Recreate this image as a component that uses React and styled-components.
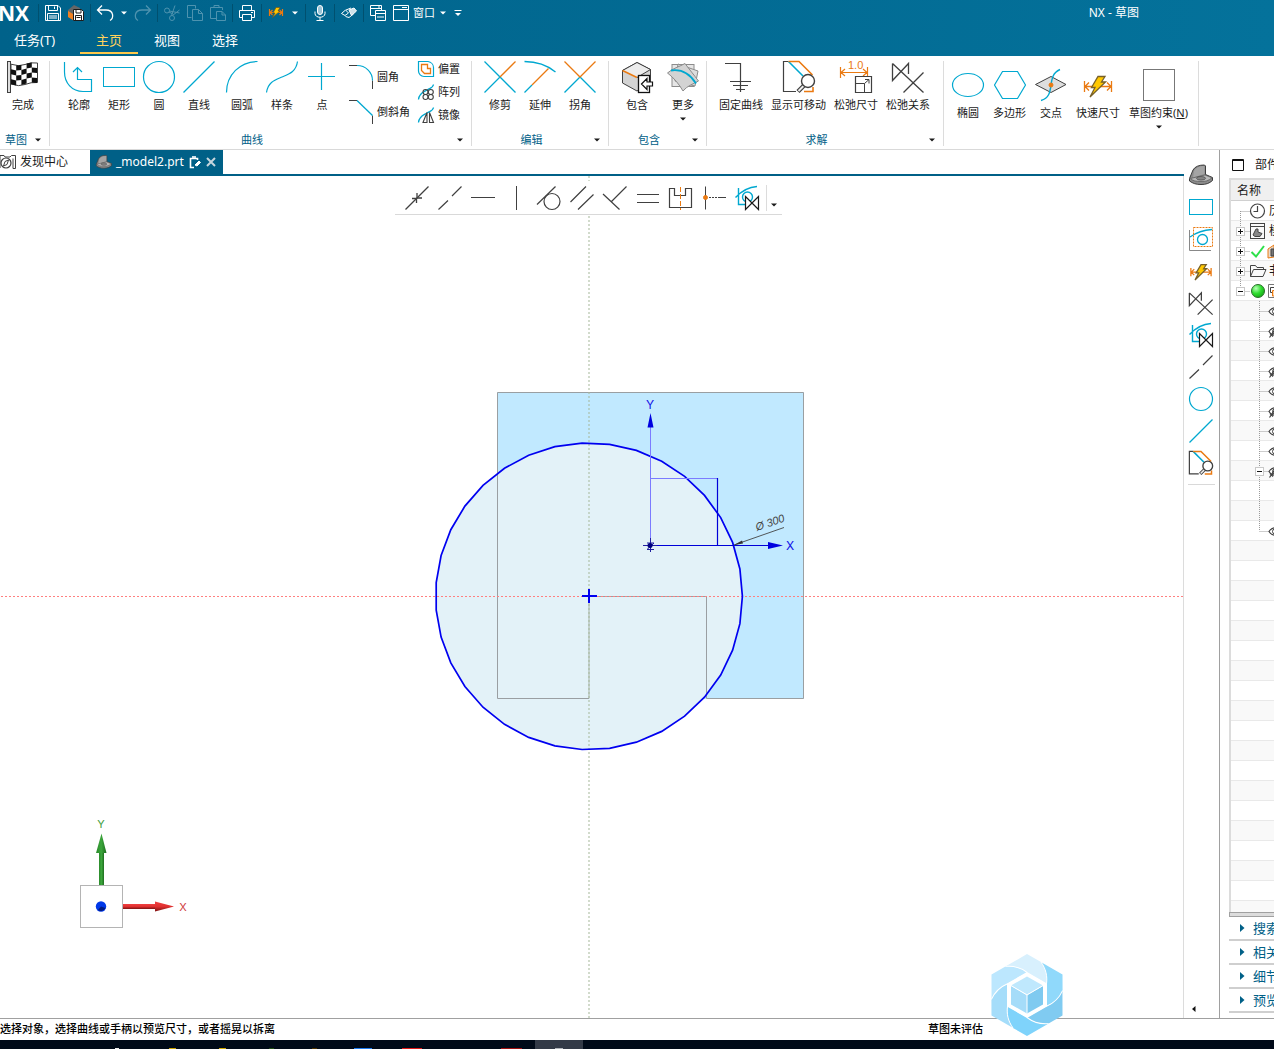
import React from "react";
import styled, { createGlobalStyle, css } from "styled-components";

const INK = "#404040";
const CYAN = "#00a8d0";
const ORANGE = "#ea7a12";
const NAVY = "#006087";

const GlobalStyle = createGlobalStyle`
  *, *::before, *::after { box-sizing: border-box; }
  body {
    margin: 0;
    background: #fff;
    color: #1a1a1a;
    font-family: "Noto Sans", "Noto Sans CJK SC", sans-serif;
    font-size: 11px;
    line-height: 16px;
  }
  button {
    margin: 0;
    padding: 0;
    border: 0;
    background: none;
    color: inherit;
    font: inherit;
    cursor: pointer;
  }
  ul { margin: 0; padding: 0; list-style: none; }
  svg { display: block; flex: none; overflow: visible; }
`;

/* ---------- window frame ---------- */

const Window = styled.div`
  position: relative;
  display: flex;
  flex-direction: column;
  height: 100vh;
  overflow: hidden;
`;

const Header = styled.header`
  flex: none;
  background: linear-gradient(90deg, #00628a, #04729b);
  color: #fff;
`;

const QuickBar = styled.div`
  display: flex;
  align-items: center;
  height: 26px;
`;

const Logo = styled.strong`
  width: 39px;
  height: 18px;
  border-right: 1px solid #00506f;
  font: bold 21px/18px "Open Sans", "Noto Sans", sans-serif;
  text-indent: -2px;
  white-space: nowrap;
`;

const QuickGroup = styled.div`
  display: flex;
  align-items: center;
  gap: 7px;
  height: 18px;
  padding: 0 6px;
  border-right: ${(p) => (p.$last ? "0" : "1px solid #00506f")};
`;

const IconButton = styled.button`
  display: flex;
  align-items: center;
  justify-content: center;
  gap: 4px;
  min-width: ${(p) => p.$w || 16}px;
  height: ${(p) => p.$h || 16}px;
  opacity: ${(p) => (p.disabled ? 0.3 : 1)};
`;

const WindowTitle = styled.h1`
  margin: 0 135px 0 auto;
  font-size: 12px;
  font-weight: 400;
  line-height: 16px;
`;

const MenuBar = styled.nav`
  display: flex;
  height: 30px;
`;

const MenuItem = styled.button`
  width: ${(p) => (p.$first ? 80 : 58)}px;
  height: 28px;
  padding: 2px 0 0;
  border-bottom: 2px solid transparent;
  font-size: 13px;
  line-height: 24px;
  ${(p) => p.$first && css`
    padding-left: 14px;
    text-align: left;
  `}
  ${(p) => p.$active && css`
    border-color: #ffc84a;
    color: #ffd35c;
  `}
`;

/* ---------- ribbon ---------- */

const Ribbon = styled.section`
  display: flex;
  flex: none;
  height: 94px;
  padding: 5px 0 3px;
  border-bottom: 1px solid #d9d9d9;
`;

const Group = styled.div`
  display: flex;
  flex-direction: column;
  justify-content: space-between;
  flex: none;
  width: ${(p) => p.$w}px;
  border-right: 1px solid #dcdcdc;
`;

const GroupBody = styled.div`
  display: flex;
  align-items: flex-start;
  gap: ${(p) => p.$gap || 8}px;
  padding: ${(p) => (p.$low ? 8 : 0)}px 0 0 ${(p) => p.$pad}px;
`;

const Cluster = styled.div`
  display: flex;
  gap: 8px;
`;

const GroupFooter = styled.div`
  display: flex;
  align-items: center;
  height: 13px;
  padding-right: 5px;
  color: ${NAVY};
`;

const GroupName = styled.span`
  flex: 1;
  text-align: center;
  line-height: 13px;
`;

const Tool = styled.button`
  display: flex;
  flex-direction: column;
  align-items: center;
  gap: 4px;
  min-width: 32px;
  white-space: nowrap;
`;

const ToolArrow = styled.span`
  display: flex;
  height: 4px;
`;

const Stack = styled.div`
  display: flex;
  flex-direction: column;
  align-items: flex-start;
  gap: ${(p) => (p.$large ? 3 : 7)}px;
`;

const RowTool = styled.button`
  display: flex;
  align-items: center;
  gap: 4px;
  height: ${(p) => (p.$large ? 32 : 16)}px;
  white-space: nowrap;
`;

/* ---------- work area ---------- */

const Body = styled.div`
  display: flex;
  flex: 1;
  min-height: 0;
`;

const Main = styled.main`
  display: flex;
  flex: 1;
  flex-direction: column;
  min-width: 0;
`;

const DocTabs = styled.div`
  display: flex;
  flex: none;
  height: 26px;
  border-bottom: 2px solid ${NAVY};
  font-size: 12px;
`;

const DocTab = styled.button`
  display: flex;
  align-items: center;
  gap: 4px;
  width: ${(p) => (p.$active ? 133 : 90)}px;
  padding: 0 ${(p) => (p.$active ? 6 : 0)}px;
  white-space: nowrap;
  ${(p) => p.$active && css`
    background: ${NAVY};
    color: #fff;
  `}
`;

const TabActions = styled.span`
  display: flex;
  gap: 4px;
  margin-left: auto;
`;

const Canvas = styled.div`
  position: relative;
  flex: 1;
  min-height: 0;
  border-right: 1px solid #dcdcdc;
  overflow: hidden;
`;

const Scene = styled.svg`
  position: absolute;
  inset: 0;
  width: 100%;
  height: 100%;
`;

const ConstraintBar = styled.div`
  position: absolute;
  top: 5px;
  left: 395px;
  display: flex;
  align-items: center;
  gap: 7px;
  height: 34px;
  padding: 0 3px 0 10px;
  border-bottom: 1px solid #d9d9d9;
  background: #fff;
`;

const ConstraintTools = styled.div`
  display: flex;
  gap: 9px;
`;

const OverflowCell = styled.div`
  display: flex;
  align-items: center;
  width: 13px;
  height: 26px;
  padding: 14px 0 0 3px;
  border-left: 1px solid #dcdcdc;
`;

const Rail = styled.aside`
  display: flex;
  flex: none;
  flex-direction: column;
  align-items: center;
  gap: 8px;
  width: 35px;
  padding: 13px 1px 3px 0;
`;

const RailLine = styled.hr`
  width: 27px;
  margin: 1px 0 0;
  border: 0;
  border-top: 1px solid #d9d9d9;
`;

const RailFooter = styled.div`
  display: flex;
  width: 100%;
  margin-top: auto;
  padding-left: 6px;
`;

/* ---------- navigator ---------- */

const Panel = styled.aside`
  display: flex;
  flex: none;
  flex-direction: column;
  width: 55px;
  border-left: 1px solid #a0a0a0;
  padding-left: 9px;
  overflow: hidden;
`;

const PanelTitle = styled.h2`
  display: flex;
  align-items: center;
  gap: 11px;
  height: 28px;
  margin: 0;
  padding: 2px 0 0 3px;
  font-size: 12px;
  font-weight: 400;
  white-space: nowrap;
`;

const Tree = styled.div`
  display: flex;
  flex: 1;
  flex-direction: column;
  min-height: 0;
  border-top: 2px solid #dcdcdc;
  border-left: 2px solid #dcdcdc;
`;

const TreeHead = styled.div`
  flex: none;
  height: 21px;
  padding-left: 6px;
  border-bottom: 1px solid #d0d0d0;
  background: #f0f0f0;
  font-size: 12px;
  line-height: 22px;
`;

const TreeList = styled.ul`
  flex: 1;
  min-height: 0;
  overflow: hidden;
`;

const TreeRow = styled.li`
  display: flex;
  height: 20px;
  font-size: 12px;
  line-height: 20px;
  white-space: nowrap;
  box-shadow: inset 0 -1px #e9e9e9;
  &:nth-child(even) { background: #f9f9f9; }
`;

const Splitter = styled.div`
  flex: none;
  height: 5px;
  border: 1px solid #a0a0a0;
  border-width: 1px 0 1px 1px;
  background: #dcdcdc;
`;

const Section = styled.button`
  display: flex;
  flex: none;
  align-items: center;
  gap: 8px;
  height: 24px;
  padding-left: 10px;
  border-bottom: 2px solid #cfcfcf;
  color: ${NAVY};
  font-size: 13px;
  white-space: nowrap;
`;

const PanelEnd = styled.div`
  flex: none;
  height: 5px;
`;

/* ---------- bottom ---------- */

const StatusBar = styled.footer`
  display: flex;
  flex: none;
  align-items: center;
  justify-content: space-between;
  height: 22px;
  padding: 0 291px 2px 0;
  border-top: 1px solid #a0a0a0;
  font-weight: 500;
  color: #000;
`;

const Taskbar = styled.div`
  flex: none;
  height: 9px;
  background: #000a18;
`;

const Watermark = styled.div`
  position: absolute;
  right: 211px;
  bottom: 13px;
`;

/* ---------- icons ---------- */

const Icon = ({ s = 32, children, stroke = INK, w = s, h = s }) => (
  <svg width={w} height={h} viewBox={`0 0 ${w} ${h}`} fill="none" stroke={stroke} aria-hidden="true">
    {children}
  </svg>
);

const Caret = ({ color = "#1a1a1a" }) => (
  <svg width="8" height="4" viewBox="0 0 8 4" aria-hidden="true">
    <path d="M1 0.5H7L4 3.5Z" fill={color} />
  </svg>
);

const MovableGlyph = ({ sw = 1.2 }) => (
  <>
    <path d="M5.5 0.5H0.5V30.5H13" strokeWidth={sw} />
    <path d="M5.5 0.5L20 15" stroke={CYAN} strokeWidth={sw + 0.4} />
    <path d="M5.5 0.5H16L29.5 14M30 26V30.5H21" stroke={ORANGE} strokeWidth={sw + 0.4} />
    <path d="M21 24.5L15 30.5" strokeWidth="4.5" />
    <path d="M21 24.5L15.5 30" stroke="#eee" strokeWidth="2" />
    <circle cx="25" cy="20" r="6.5" fill="#fff" strokeWidth={sw + 0.2} />
  </>
);

const RelaxGlyph = ({ sw = 1.3 }) => (
  <path d="M0.5 2.5V19.5L16.5 2.5V13M0.5 2.5L31.5 31.5M31.5 11.5L11.5 31.5" strokeWidth={sw} />
);

const BoltGlyph = ({ sw = 1.3 }) => (
  <>
    <path d="M2.5 12V23M29.5 12V23M3 17.5H29M7 13.5L3 17.5L7 21.5M25 13.5L29 17.5L25 21.5" stroke={ORANGE} strokeWidth={sw} />
    <path d="M16 7.5H23L19.5 13H23.5L8 28L13 18.5H9.5Z" fill="#ffc800" stroke="#77602a" strokeWidth={sw} />
  </>
);

const Bowtie = () => (
  <>
    <path d="M3.5 2V18.5H10M0.5 11.5C7 4.5 14 1 22 0.5" stroke={CYAN} strokeWidth="1.4" />
    <circle cx="12.5" cy="11" r="5" stroke={CYAN} strokeWidth="1.4" />
    <path d="M10.5 10.5V23.5L23.5 10.5V23.5Z" fill="#fff" stroke="#1a1a1a" strokeWidth="1.2" />
  </>
);

const PartGlyph = () => (
  <>
    <path d="M0.5 15.5L4 7C6 3.5 10 2 15.5 2L16.5 3V11.5L23.500 14.5V17.500C20 20.5 17 21.5 12 21.5S4 20.500 0.5 18Z" fill="#8b8b8b" stroke="#3c3c3c" />
    <path d="M5 8C7 4.5 10 3 15.5 3V11L4 14.500Z" fill="#a4a4a4" stroke="none" />
    <path d="M1.500 15.500L16 12L23 14.800C19 18 17 18.500 12 18.500S4 18 1.500 15.500Z" fill="#b9b9b9" stroke="#555" strokeWidth="0.700" />
    <ellipse cx="12" cy="15.300" rx="4.500" ry="1.800" fill="#858585" stroke="#444" strokeWidth="0.700" />
  </>
);

const FlagIcon = () => {
  const cells = [];
  for (let r = 0; r < 4; r++)
    for (let c = 0; c < 5; c++)
      if ((r + c) % 2 === 1) {
        const x = 4 + c * 5.2;
        const a = [1.2, 2.4, 2, 0.4, -0.6, 0];
        const y0 = 2 + r * 5 + a[c];
        const y1 = 2 + r * 5 + a[c + 1];
        cells.push(`M${x} ${y0}L${x + 5.2} ${y1}V${y1 + 5}L${x} ${y0 + 5}Z`);
      }
  return (
    <Icon>
      <path d="M4 3.2Q12 6 18 3.500T30.500 2V21.500Q24 21 18 23.500T4 23Z" fill="#fff" />
      <path d={cells.join("")} fill="#111" stroke="none" />
      <rect x="0.5" y="0.5" width="3" height="31" fill="#ddd" />
    </Icon>
  );
};

const contourIcon = (
  <Icon stroke={CYAN}>
    <path strokeWidth="1.2" d="M1.5 1V11C1.5 22 9 30.500 20 30.500H28.500V18.500H14.500V6.500M10 11L14.500 6.500L19 11" />
  </Icon>
);
const rectIcon = <Icon stroke={CYAN}><rect x="0.5" y="6.5" width="31" height="19" /></Icon>;
const circleIcon = <Icon stroke={CYAN}><circle cx="16" cy="16" r="15.500" strokeWidth="1.2" /></Icon>;
const lineIcon = <Icon stroke={CYAN}><path strokeWidth="1.2" d="M0.5 31.5L31.5 0.5" /></Icon>;
const arcIcon = <Icon stroke={CYAN}><path strokeWidth="1.2" d="M0.5 31.5C0.5 14 14 0.5 31.5 0.5" /></Icon>;
const splineIcon = <Icon stroke={CYAN}><path strokeWidth="1.2" d="M0.5 31.5C2 21 9 19 16 16S30 11 31.5 0.5" /></Icon>;
const pointIcon = <Icon stroke={CYAN}><path d="M15.500 2V29M2 15.500H29" strokeWidth="1.2" /></Icon>;
const filletIcon = (
  <Icon s={24}>
    <path d="M0 0.5H8M23.500 15.500V24" />
    <path d="M8 0.5C16.500 0.500 23.500 7 23.500 15.500" stroke={CYAN} strokeWidth="1.2" />
  </Icon>
);
const chamferIcon = (
  <Icon s={24}>
    <path d="M0 0.5H8M23.500 15.500V24" />
    <path d="M8 0.5L23.500 15.500" stroke={CYAN} strokeWidth="1.3" />
  </Icon>
);
const offsetIcon = (
  <Icon s={16} stroke={CYAN}>
    <path strokeWidth="1.2" d="M0.5 0.5H10C13 1 15.500 3.500 15.500 6.500V15.500H6C3 15.500 0.500 13 0.500 10Z" />
    <path strokeWidth="1.3" stroke={ORANGE} d="M3.500 3.500H9.500V7.500H12.500V12.500H6.500L3.500 9.500Z" />
  </Icon>
);
const patternIcon = (
  <Icon s={16}>
    <path stroke={CYAN} strokeWidth="1.3" d="M0.5 15.500C1 9 6 8 9 6S15 4 15.500 0.500" />
    <g strokeWidth="1.1">
      <circle cx="7.5" cy="8" r="2.500" /><circle cx="12.800" cy="8" r="2.500" />
      <circle cx="7.5" cy="13" r="2.500" /><circle cx="12.800" cy="13" r="2.500" />
    </g>
  </Icon>
);
const mirrorIcon = (
  <Icon s={16}>
    <path stroke={CYAN} strokeWidth="1.3" d="M0.5 15.500C1 9 6 8 9 6S15 4 15.500 0.500" />
    <path strokeWidth="1.1" d="M9 15.500V5.500L5 15.500ZM11.500 15.500V5.500L15.500 15.500Z" />
  </Icon>
);
const trimIcon = (
  <Icon stroke={CYAN}>
    <path strokeWidth="1.3" d="M0.5 0.5L31.5 31.5M0.5 31.5L16 16" />
    <path strokeWidth="1.3" stroke={ORANGE} d="M16 16L31.5 0.5" />
  </Icon>
);
const extendIcon = (
  <Icon stroke={CYAN}>
    <path strokeWidth="1.3" d="M0.5 0.5C12 0.500 23 4 31.500 11M0.5 31.500L8 24" />
    <path strokeWidth="1.3" stroke={ORANGE} d="M24.500 7.500L8 24" />
  </Icon>
);
const cornerIcon = (
  <Icon stroke={CYAN}>
    <path strokeWidth="1.3" d="M0.5 31.5L16 16L31.5 31.5" />
    <path strokeWidth="1.3" stroke={ORANGE} d="M0.5 0.5L16 16L31.5 0.5" />
  </Icon>
);
const includeIcon = (
  <Icon>
    <path d="M1.500 9.500L16 1.500L29.500 8.500V22L16 30L1.500 22Z" fill="#d3d3d3" />
    <path d="M1.500 9.500L16 1.500L29.500 8.500L16 16.500Z" fill="#ececec" stroke="none" />
    <path d="M16 1.500L1.500 9.500V22M16 1.500L29.500 8.500L16 16.500" />
    <path d="M1.500 9.500L16 16.500" stroke={ORANGE} strokeWidth="1.5" />
    <rect x="17.500" y="14.500" width="11" height="17" fill="#fff" stroke="#111" strokeWidth="1.3" />
    <path d="M20.500 23L26 17.500V21H31.500V25H26V28.500Z" fill="#fff" stroke="#111" strokeWidth="1.2" />
  </Icon>
);
const moreIcon = (
  <Icon stroke="#8c8c8c">
    <rect x="5" y="3.500" width="22" height="22" fill="#e6e6e6" />
    <path d="M11 3L31 10L28 25L8 20Z" fill="#ddd" />
    <path d="M0.5 12C6 7 12 6 18 2.500C22 8 27 14 31.500 20C26 23 20 25 16 30C12 23 7 17 0.500 12Z" fill="#d3d3d3" />
    <path d="M4 9.500C14 8 23 13 29 22.500" stroke={CYAN} strokeWidth="1.8" />
  </Icon>
);
const groundIcon = (
  <Icon>
    <path strokeWidth="1.2" d="M0 2.500H15.500V31M5 20.500H26M8 24.500H23M11 28.500H20" />
  </Icon>
);
const relaxDimIcon = (
  <Icon>
    <text x="8" y="8" fontSize="11" fontFamily="'Liberation Sans', sans-serif" fill={ORANGE} stroke="none">1.0</text>
    <path stroke={ORANGE} strokeWidth="1.2" d="M0.500 6V17M27.500 6V17M1 11.500H27M5 8L1 11.500L5 15M23 8L27 11.500L23 15" />
    <path strokeWidth="1.2" fill="#fff" d="M15.500 15.500H31.500V31.500H15.500Z" />
    <path d="M15.500 22.500H24.500V31.500M24.500 22.500L29 18.500M25 18.500H29V22.500" />
  </Icon>
);
const ellipseIcon = <Icon stroke={CYAN}><ellipse cx="16" cy="16" rx="15.500" ry="11.500" strokeWidth="1.2" /></Icon>;
const polygonIcon = <Icon stroke={CYAN}><path strokeWidth="1.2" d="M0.5 16L8.500 2.500H23.500L31.500 16L23.500 29.500H8.500Z" /></Icon>;
const crossPointIcon = (
  <Icon>
    <path d="M0.500 15.500L16 7.500L31 15.500L16 23.500Z" fill="#dedede" />
    <path d="M6 31.500C22 27 10 7 25 0.500" stroke={CYAN} strokeWidth="1.4" />
    <circle cx="16" cy="16" r="2" fill={ORANGE} stroke={ORANGE} />
  </Icon>
);
const squareIcon = <Icon stroke="#777"><rect x="0.5" y="0.5" width="31" height="31" /></Icon>;

/* 16px icons of the quick bar */
const saveIcon = <Icon s={16} stroke="#fff"><path d="M0.5 0.5H13L15.500 3V15.500H0.500ZM3.500 0.500V5.500H12.500V0.500M2.500 15.500V8.500H13.500V15.500M4 11H12M4 13H12M9.500 1.500V4" /></Icon>;
const saveAsIcon = (
  <Icon s={16}>
    <path d="M0 5L6 0L12 3V13L5 15L0 12Z" fill="#666" stroke="none" />
    <path d="M0 6L5 9V15L0 12Z" fill="#f08020" stroke="none" />
    <path d="M5.500 4.500H13.500L15.500 6.500V15.500H5.500Z" fill="#fff" stroke="#1d1d1d" />
    <path d="M8 4.500V8H13V4.500M7.500 15.500V10.500H13.500V15.500M8.500 12.500H12.500" stroke="#1d1d1d" />
  </Icon>
);
const undoIcon = <Icon s={16} stroke="#fff"><path strokeWidth="1.3" d="M5 0.500L0.500 5L5 9.500M0.500 5H9C17 5 17 13 13 15.500" /></Icon>;
const redoIcon = <Icon s={16} stroke="#fff"><path strokeWidth="1.3" d="M11 0.500L15.500 5L11 9.500M15.500 5H7C-1 5 -1 13 3 15.500" /></Icon>;
const cutIcon = <Icon s={16} stroke="#fff"><circle cx="3" cy="5.500" r="2.500" /><circle cx="8" cy="13" r="2.500" /><path d="M5.500 6L15.500 8M7.500 10.500L11 0.500M8.500 10.500L15.500 5M5 7L9 9" /></Icon>;
const copyIcon = <Icon s={16} stroke="#fff"><path d="M4.500 12.500H0.500V0.500H8.500V3.500M5.500 4.500H11.500L15.500 8.500V15.500H5.500ZM11.500 4.500V8.500H15.500" /></Icon>;
const pasteIcon = <Icon s={16} stroke="#fff"><path d="M6 13.500H0.500V2.500H12.500V5M4 2.500V0.500H9V2.500M6.500 6.500H12L15.500 10V15.500H6.500ZM12 6.500V10H15.500" /></Icon>;
const printIcon = <Icon s={16} stroke="#fff"><path d="M3.500 5V0.500H12.500V5M3 12.500H0.500V5.500H15.500V12.500H13M3.500 9.500H12.500V15.500H3.500ZM12 7.500H14" /></Icon>;
const quickDimIcon = (
  <Icon s={16} stroke={ORANGE}>
    <path d="M1.500 4V11M14.500 4V11M2 7.500H14M4.500 5L2 7.500L4.500 10M11.500 5L14 7.500L11.500 10" strokeWidth="1.2" />
    <path d="M8 2.500H12L10 6H12L4.500 12.500L7 8H5Z" fill="#ffc800" stroke="#6e5520" strokeWidth="0.700" />
  </Icon>
);
const micIcon = <Icon s={16} stroke="#fff"><rect x="5.500" y="0.500" width="5" height="9" rx="2.500" fill="#9cc4d6" /><path d="M3 6.500V8.500C3 13.500 13 13.500 13 8.500V6.500M8 12.500V15.500M4.500 15.500H11.500" /></Icon>;
const brushIcon = <Icon s={16} stroke="#fff"><path d="M0.500 8.500L4.500 5L7.500 8L4 10.500ZM5 5L10 3M4.500 11.500L8 12.500L12.500 9" /><path d="M8 5L13 3L15.500 6L10.500 10.500Z" fill="#cfe2ea" /></Icon>;
const windowsIcon = <Icon s={16} stroke="#fff"><path d="M5 10.500H0.500V0.500H11.500V5M0.500 3.500H11.500M8 2H10M5.500 5.500H15.500V15.500H5.500ZM5.500 8.500H15.500M7 12H14" /></Icon>;
const windowIcon = <Icon s={16} stroke="#fff"><path d="M0.500 0.500H15.500V15.500H0.500ZM0.500 4.500H15.500M9 2.500H14" /></Icon>;

/* constraint tools above the sheet */
const constraintTools = [
  ["重合", <><path d="M0.500 23.500L23.500 0.500" strokeWidth="1.2" /><path d="M7 12.500H11.500V17M12 7V12H17" strokeWidth="1.3" /></>],
  ["共线", <path key="p" d="M0.500 23.500L10 14.500M14 10L23.500 0.500" strokeWidth="1.2" />],
  ["水平", <path key="p" d="M0 11.500H24" />],
  ["竖直", <path key="p" d="M12.500 0V24" />],
  ["相切", <><path d="M0 18.500L18.500 0.500" strokeWidth="1.2" /><circle cx="15" cy="15.500" r="8" strokeWidth="1.2" /></>],
  ["平行", <path key="p" d="M0.500 16L16 0.500M8 23.500L23.500 8.500" strokeWidth="1.2" />],
  ["垂直", <path key="p" d="M0 8L16.500 23.500M8.500 15.500L23.500 0.500" strokeWidth="1.2" />],
  ["等长", <path key="p" d="M1 8.500H23M1 16.500H23" />],
  ["对称", <><path d="M0.500 2.500H5.500V9.500H16.500V2.500H22.500V21.500H0.500Z" strokeWidth="1.2" /><path d="M11.500 1V24" stroke={ORANGE} strokeDasharray="5 2" /></>],
  ["中点", <><path d="M3.500 0.500V23.500M16 11.500H24" /><path d="M7 11.500H15" strokeDasharray="2 1" /><circle cx="3.500" cy="11.500" r="2" fill={ORANGE} stroke={ORANGE} /></>],
  ["松弛", <Bowtie key="p" />],
];

const scaled = (k, node) => <g transform={`scale(${k})`}>{node}</g>;

const railTools = [
  ["部件", <PartGlyph key="p" />],
  ["矩形", <rect key="p" x="0.500" y="4.500" width="23" height="15" stroke={CYAN} />],
  ["草图", <><path d="M0.500 3V23.500H22" stroke="#888" /><path d="M1 10C8 5 14 3 23 2.500" stroke={CYAN} strokeWidth="1.3" /><circle cx="13.500" cy="12.500" r="5" stroke={CYAN} strokeWidth="1.3" /><rect x="4.500" y="0.500" width="19" height="19" stroke={ORANGE} strokeDasharray="2 1" /></>],
  ["快速尺寸", scaled(0.75, <BoltGlyph sw={1.7} />)],
  ["松弛关系", scaled(0.75, <RelaxGlyph sw={1.7} />)],
  ["松弛", <Bowtie key="p" />],
  ["直线段", <path key="p" d="M0.500 23.500L10 14.500M14 10L23.500 0.500" strokeWidth="1.2" />],
  ["圆", <circle key="p" cx="12" cy="12" r="11.500" stroke={CYAN} strokeWidth="1.2" />],
  ["直线", <path key="p" d="M0.500 23.500L23.500 0.500" stroke={CYAN} strokeWidth="1.2" />],
  ["显示可移动", scaled(0.75, <MovableGlyph sw={1.6} />)],
];

/* ---------- canvas drawing ---------- */

/* the viewer tessellates the circle into 35 chords */
const circlePoints = Array.from({ length: 35 }, (_, i) => {
  const a = (i * 2 * Math.PI) / 35;
  return `${(589 + 153.4 * Math.cos(a)).toFixed(1)},${(596.3 - 153.4 * Math.sin(a)).toFixed(1)}`;
}).join(" ");

const Sketch = () => (
  <Scene fill="none" aria-label="草图">
    <defs>
      <linearGradient id="shaftG" x1="0" x2="1" y1="0" y2="0"><stop offset="0" stopColor="#2b8a2b" /><stop offset="0.500" stopColor="#3ba53b" /><stop offset="1" stopColor="#1f6e1f" /></linearGradient>
      <linearGradient id="shaftR" x1="0" x2="0" y1="0" y2="1"><stop offset="0" stopColor="#f04040" /><stop offset="0.500" stopColor="#e03030" /><stop offset="1" stopColor="#7d1212" /></linearGradient>
    </defs>
    <g transform="translate(0,-176)">
      <rect x="497" y="392" width="307" height="307" fill="#c1e9ff" stroke="none" />
      <polygon points={circlePoints} fill="#e3f2f8" />
      <path d="M589 698.500H497.500V392.500H803.500V698.500H706.500V596.500H589" stroke="#9a9fa2" />
      <path d="M589 596V698.500" stroke="#a5b2a8" />
      <path d="M589 176V1018" stroke="#a5b89a" strokeOpacity="0.500" strokeWidth="2" strokeDasharray="2 2" />
      <line x1="1" x2="100%" y1="596.500" y2="596.500" stroke="#ff8080" strokeDasharray="2 2" />
      <polygon points={circlePoints} stroke="#0000f0" strokeWidth="1.700" />
      <path d="M589 589V603M582 596H597" stroke="#0000f0" strokeWidth="2" />
      <path d="M650.500 545V427M650 478.500H717" stroke="#7b7bff" />
      <path d="M717.500 478V545M650 545.500H770" stroke="#0000d8" strokeWidth="1.200" />
      <path d="M650.500 413L653.500 427.500H647.500ZM783 545.500L768 542V549Z" fill="#0000e0" />
      <path d="M643 545.500H657M650.500 538V552M647 543H654L647 549.500H654" stroke="#2020a0" />
      <circle cx="650" cy="545.500" r="2.500" fill="#000080" />
      <path d="M734 545L784 527.500" stroke="#444" strokeWidth="0.900" />
      <path d="M734 545L742 540.500L743 543.500Z" fill="#333" />
      <g fontFamily="Inter, 'Noto Sans', sans-serif" fontSize="12" textAnchor="middle">
        <text x="650" y="409" fill="#1010e8">Y</text>
        <text x="790" y="550" fill="#1010e8">X</text>
        <text x="101" y="828" fill="#3fa03f" fontSize="11">Y</text>
        <text x="183" y="911" fill="#d04040" fontSize="11">X</text>
      </g>
      <text transform="translate(757,531) rotate(-19)" fontFamily="'Liberation Sans', sans-serif" fontStyle="italic" fontSize="11" fill="#444">Ø 300</text>

      <rect x="80.500" y="885.500" width="42" height="42" stroke="#b4b4b4" />
      <rect x="99" y="852" width="5" height="33" fill="url(#shaftG)" />
      <path d="M101.500 833.500L106.500 853H96Z" fill="url(#shaftG)" />
      <rect x="123" y="904" width="33" height="5" fill="url(#shaftR)" />
      <path d="M174 906.500L155 901.500V911.500Z" fill="url(#shaftR)" />
      <circle cx="101" cy="906.500" r="5.200" fill="#0038e8" />
      <path d="M101 906.500L105.500 908A5 5 0 0 1 98 910Z" fill="#001a80" />
    </g>
  </Scene>
);

/* ---------- tree ---------- */

const dots = { stroke: "#9a9a9a", strokeDasharray: "1 1" };

const Expander = ({ x, open }) => (
  <g>
    <rect x={x - 4} y="6.500" width="8" height="8" fill="#fff" stroke="#c8c8c8" />
    <path d={open ? `M${x - 2.5} 10.500H${x + 2.5}` : `M${x - 2.5} 10.500H${x + 2.5}M${x} 8V13`} stroke="#111" />
  </g>
);

const rootGlyphs = {
  clock: <g stroke="#444" strokeWidth="1.200"><circle cx="26.500" cy="10" r="7" /><path d="M26.500 5V10.500H22.500" /></g>,
  views: <g stroke="#444"><rect x="19.500" y="2.500" width="14" height="15" /><path d="M19.500 5.500H33.500" /><path d="M22 14L25 8L27 8V11L31 12.500L29 15.500H24Z" fill="#888" /></g>,
  check: <g><path d="M20.500 11L25 15.500L33 5" stroke="#2ee04a" strokeWidth="2" /><path d="M37 8L43 4V16L37 17Z" fill="#e8d8c8" stroke={ORANGE} /><path d="M40 8H43V15H40Z" fill="#777" /></g>,
  folder: <path d="M19.500 15.500V4.500H24.500L26 6.500H32.500V8.500M19.500 15.500L22.500 8.500H35L32 15.500Z" stroke="#444" />,
  ball: <g><circle cx="27" cy="10" r="6.500" fill="url(#ballG)" stroke="#2c6e2c" /><path d="M43 3.500H37.500V16.500H43" stroke="#777" /><path d="M43 6.500H39.500V11.500H43" stroke={INK} /><path d="M41.500 9.500H44V15H41.500Z" fill="#ffd8b0" stroke={ORANGE} /></g>,
};

const roots = [
  { glyph: "clock", text: "历" },
  { glyph: "views", text: "模", box: true },
  { glyph: "check", box: true },
  { glyph: "folder", text: "非", box: true },
  { glyph: "ball", box: true, open: true },
];

const children = ["eye", "off", "eye", "off", "eye", "off", "eye", "eye", "offbox", "none", "none", "eye"];

const RootRow = ({ row, index }) => (
  <TreeRow>
    <Icon w={38} h={20}>
      <defs>
        <radialGradient id="ballG" cx="0.35" cy="0.3" r="0.8"><stop offset="0" stopColor="#b8ffb8" /><stop offset="0.500" stopColor="#2fdd2f" /><stop offset="1" stopColor="#12a012" /></radialGradient>
      </defs>
      <path d={index === 0 ? "M9.500 10V20" : index === 4 ? "M9.500 0V10" : "M9.500 0V20"} {...dots} />
      <path d="M9.500 10.500H19" {...dots} />
      {row.box && <Expander x={9.5} open={row.open} />}
      {rootGlyphs[row.glyph]}
    </Icon>
    {row.text}
  </TreeRow>
);

const ChildRow = ({ kind, last }) => (
  <TreeRow>
    <Icon w={43} h={20}>
      <path d={last ? "M28.500 0V10" : "M28.500 0V20"} {...dots} />
      {kind !== "none" && (
        <>
          <path d="M28.500 10.500H38" {...dots} />
          <path d="M38 10.500C41 5.500 48 5.500 51 10.500C48 15.500 41 15.500 38 10.500Z" strokeWidth="1.200" />
          <circle cx="44" cy="10.500" r="2.500" />
        </>
      )}
      {kind.startsWith("off") && <path d="M38.500 16.500L47 4M39 12.500L42 15.500" strokeWidth="1.200" />}
      {kind === "offbox" && <Expander x={28.5} open />}
    </Icon>
  </TreeRow>
);

/* ---------- watermark emblem ---------- */

const blades = [
  [0, "#d8f0fd"], [60, "#90d9fb"], [120, "#80cbf1"],
  [180, "#7fd3fb"], [240, "#a5ddfa"], [300, "#bce7fe"],
];

const Emblem = () => (
  <svg width="72" height="82" viewBox="-36 -41 72 82" aria-hidden="true">
    {blades.map(([angle, color]) => (
      <path
        key={angle}
        transform={`rotate(${angle})`}
        d="M0 -22.500C-7 -28 -14 -29 -21.200 -28.700L0 -41L14 -33C19 -26 20.500 -19 19.500 -11.200Z"
        fill={color}
      />
    ))}
    {blades.map(([angle]) => (
      <path
        key={angle}
        transform={`rotate(${angle})`}
        d="M14 -33C19 -26 20.500 -19 19.500 -11.200"
        fill="none"
        stroke="#fff"
      />
    ))}
    <path d="M0 -23L20 -11.500V11.500L0 23L-20 11.500V-11.500Z" fill="#fff" />
    <path d="M0 -18.500L16 -9.500L0 -0.500L-16 -9.500Z" fill="#bfe8fd" />
    <path d="M-16 -9V9.500L0 18.500V0Z" fill="#a5dcf9" />
    <path d="M16 -9V9.500L0 18.500V0Z" fill="#7fcaf0" />
    <path d="M-16 -9.500L0 0L16 -9.500M0 0V18.500" fill="none" stroke="#fff" />
  </svg>
);

/* ---------- page ---------- */

const ToolButton = ({ icon, children: label, menu }) => (
  <Tool type="button">
    {icon}
    <span>{label}</span>
    {menu && <ToolArrow><Caret /></ToolArrow>}
  </Tool>
);

const RibbonGroup = ({ w, name, pad, gap, low, children: tools }) => (
  <Group $w={w}>
    <GroupBody $pad={pad} $gap={gap} $low={low}>{tools}</GroupBody>
    {name && (
      <GroupFooter>
        <GroupName>{name}</GroupName>
        <IconButton type="button" $w={12} $h={12} aria-label={`${name}选项`}><Caret /></IconButton>
      </GroupFooter>
    )}
  </Group>
);

const Quick = ({ icon, label, ...rest }) => (
  <IconButton type="button" aria-label={label} {...rest}>{icon}</IconButton>
);

const QuickCaret = ({ label }) => <Quick $w={8} label={label} icon={<Caret color="#fff" />} />;

export default function App() {
  return (
    <Window>
      <GlobalStyle />
      <Header>
        <QuickBar>
          <Logo>NX</Logo>
          <QuickGroup>
            <Quick icon={saveIcon} label="保存" />
            <Quick icon={saveAsIcon} label="另存为" />
          </QuickGroup>
          <QuickGroup>
            <Quick icon={undoIcon} label="撤消" />
            <QuickCaret label="撤消列表" />
            <Quick icon={redoIcon} label="重做" disabled />
          </QuickGroup>
          <QuickGroup>
            <Quick icon={cutIcon} label="剪切" disabled />
            <Quick icon={copyIcon} label="复制" disabled />
            <Quick icon={pasteIcon} label="粘贴" disabled />
          </QuickGroup>
          <QuickGroup><Quick icon={printIcon} label="打印" /></QuickGroup>
          <QuickGroup>
            <Quick icon={quickDimIcon} label="快速尺寸" />
            <QuickCaret label="尺寸列表" />
          </QuickGroup>
          <QuickGroup><Quick icon={micIcon} label="语音" /></QuickGroup>
          <QuickGroup><Quick icon={brushIcon} label="触控" /></QuickGroup>
          <QuickGroup $last>
            <Quick icon={windowsIcon} label="切换窗口" />
            <IconButton type="button">{windowIcon}<span>窗口</span><Caret color="#fff" /></IconButton>
            <Quick
              $w={8}
              label="更多命令"
              icon={<Icon w={8} h={8} stroke="#fff"><path d="M0.500 1.500H7.500" /><path d="M1 4H7L4 7Z" fill="#fff" stroke="none" /></Icon>}
            />
          </QuickGroup>
          <WindowTitle>NX - 草图</WindowTitle>
        </QuickBar>
        <MenuBar>
          <MenuItem type="button" $first>任务(T)</MenuItem>
          <MenuItem type="button" $active>主页</MenuItem>
          <MenuItem type="button">视图</MenuItem>
          <MenuItem type="button">选择</MenuItem>
        </MenuBar>
      </Header>

      <Ribbon>
        <RibbonGroup w={50} name="草图" pad={7}>
          <ToolButton icon={<FlagIcon />}>完成</ToolButton>
        </RibbonGroup>
        <RibbonGroup w={422} name="曲线" pad={13} gap={11}>
          <Cluster>
            <ToolButton icon={contourIcon}>轮廓</ToolButton>
            <ToolButton icon={rectIcon}>矩形</ToolButton>
            <ToolButton icon={circleIcon}>圆</ToolButton>
            <ToolButton icon={lineIcon}>直线</ToolButton>
          </Cluster>
          <Cluster>
            <ToolButton icon={arcIcon}>圆弧</ToolButton>
            <ToolButton icon={splineIcon}>样条</ToolButton>
            <ToolButton icon={pointIcon}>点</ToolButton>
          </Cluster>
          <Cluster>
            <Stack $large>
              <RowTool type="button" $large>{filletIcon}圆角</RowTool>
              <RowTool type="button" $large>{chamferIcon}倒斜角</RowTool>
            </Stack>
            <Stack>
              <RowTool type="button">{offsetIcon}偏置</RowTool>
              <RowTool type="button">{patternIcon}阵列</RowTool>
              <RowTool type="button">{mirrorIcon}镜像</RowTool>
            </Stack>
          </Cluster>
        </RibbonGroup>
        <RibbonGroup w={137} name="编辑" pad={12}>
          <ToolButton icon={trimIcon}>修剪</ToolButton>
          <ToolButton icon={extendIcon}>延伸</ToolButton>
          <ToolButton icon={cornerIcon}>拐角</ToolButton>
        </RibbonGroup>
        <RibbonGroup w={98} name="包含" pad={12} gap={14}>
          <ToolButton icon={includeIcon}>包含</ToolButton>
          <ToolButton icon={moreIcon} menu>更多</ToolButton>
        </RibbonGroup>
        <RibbonGroup w={237} name="求解" pad={12}>
          <ToolButton icon={groundIcon}>固定曲线</ToolButton>
          <ToolButton icon={<Icon><MovableGlyph /></Icon>}>显示可移动</ToolButton>
          <ToolButton icon={relaxDimIcon}>松弛尺寸</ToolButton>
          <ToolButton icon={<Icon><RelaxGlyph /></Icon>}>松弛关系</ToolButton>
        </RibbonGroup>
        <RibbonGroup w={255} pad={8} gap={9} low>
          <ToolButton icon={ellipseIcon}>椭圆</ToolButton>
          <ToolButton icon={polygonIcon}>多边形</ToolButton>
          <ToolButton icon={crossPointIcon}>交点</ToolButton>
          <ToolButton icon={<Icon><BoltGlyph /></Icon>}>快速尺寸</ToolButton>
          <ToolButton icon={squareIcon} menu>草图约束(<u>N</u>)</ToolButton>
        </RibbonGroup>
      </Ribbon>

      <Body>
        <Main>
          <DocTabs>
            <DocTab type="button">
              <Icon s={16}>
                <path d="M0 1.500L4 1.500L5 3H10L11.500 1.500H15.500V14.500H13V4.500M0 1.500V14" />
                <circle cx="6" cy="9" r="5" strokeWidth="1.200" />
                <path d="M3.500 12L5 7.500L8.500 6L7 10.500Z" />
              </Icon>
              发现中心
            </DocTab>
            <DocTab type="button" $active>
              <Icon s={16}>{scaled(0.66, <PartGlyph />)}</Icon>
              _model2.prt
              <TabActions>
                <Icon w={12} h={12} stroke="#fff">
                  <path d="M5 11.500H1.500V2.500H8.500V4" strokeWidth="1.600" />
                  <path d="M3 1H7" strokeWidth="1.600" />
                  <path d="M6 9L10 5L11.500 6.500L8 10Z" fill="#fff" />
                </Icon>
                <Icon w={12} h={12} stroke="#c6d6de"><path d="M2 2L10 10M10 2L2 10" strokeWidth="2" /></Icon>
              </TabActions>
            </DocTab>
          </DocTabs>
          <Canvas>
            <Sketch />
            <ConstraintBar>
              <ConstraintTools>
                {constraintTools.map(([label, glyph]) => (
                  <IconButton type="button" key={label} $w={24} $h={24} aria-label={label}>
                    <Icon s={24}>{glyph}</Icon>
                  </IconButton>
                ))}
              </ConstraintTools>
              <OverflowCell>
                <IconButton type="button" $w={8} $h={8} aria-label="更多约束"><Caret /></IconButton>
              </OverflowCell>
            </ConstraintBar>
          </Canvas>
        </Main>

        <Rail>
          {railTools.map(([label, glyph]) => (
            <IconButton type="button" key={label} $w={24} $h={24} aria-label={label}>
              <Icon s={24}>{glyph}</Icon>
            </IconButton>
          ))}
          <RailLine />
          <RailFooter>
            <IconButton type="button" $w={8} $h={12} aria-label="收起">
              <svg width="8" height="8" aria-hidden="true"><path d="M5.500 1V7L2 4Z" fill="#111" /></svg>
            </IconButton>
          </RailFooter>
        </Rail>

        <Panel>
          <PanelTitle>
            <Icon w={12} h={12} stroke="#111"><path d="M0.500 0.500H11.500V11.500H0.500ZM0 1.500H12" /></Icon>
            部件
          </PanelTitle>
          <Tree>
            <TreeHead>名称</TreeHead>
            <TreeList>
              {roots.map((row, i) => <RootRow key={row.glyph} row={row} index={i} />)}
              {children.map((kind, i) => <ChildRow key={i} kind={kind} last={i === children.length - 1} />)}
              {Array.from({ length: 19 }, (_, i) => <TreeRow key={i} aria-hidden="true" />)}
            </TreeList>
          </Tree>
          <Splitter />
          {["搜索", "相关", "细节", "预览"].map((name) => (
            <Section type="button" key={name}>
              <Icon w={6} h={10} stroke="none"><path d="M1 1L5.500 5L1 9Z" fill={NAVY} /></Icon>
              {name}
            </Section>
          ))}
          <PanelEnd />
        </Panel>
      </Body>

      <StatusBar>
        <span>选择对象，选择曲线或手柄以预览尺寸，或者摇晃以拆离</span>
        <span>草图未评估</span>
      </StatusBar>
      <Taskbar>
        <svg width="600" height="9" aria-hidden="true">
          <rect x="535" y="0" width="48" height="9" fill="#333a47" />
          <rect x="115" y="8" width="4" height="1" fill="#eee" />
          <rect x="169" y="8" width="7" height="1" fill="#c9a200" />
          <rect x="219" y="8" width="7" height="1" fill="#d0a800" />
          <rect x="269" y="8" width="5" height="1" fill="#1f4d12" />
          <rect x="312" y="8" width="5" height="1" fill="#4a3000" />
          <rect x="354" y="8" width="18" height="1" fill="#1d7cf2" />
          <rect x="402" y="8" width="20" height="1" fill="#e01818" />
          <rect x="501" y="8" width="21" height="1" fill="#a01010" />
          <rect x="555" y="8" width="8" height="1" fill="#b0b4ba" />
        </svg>
      </Taskbar>

      <Watermark><Emblem /></Watermark>
    </Window>
  );
}
